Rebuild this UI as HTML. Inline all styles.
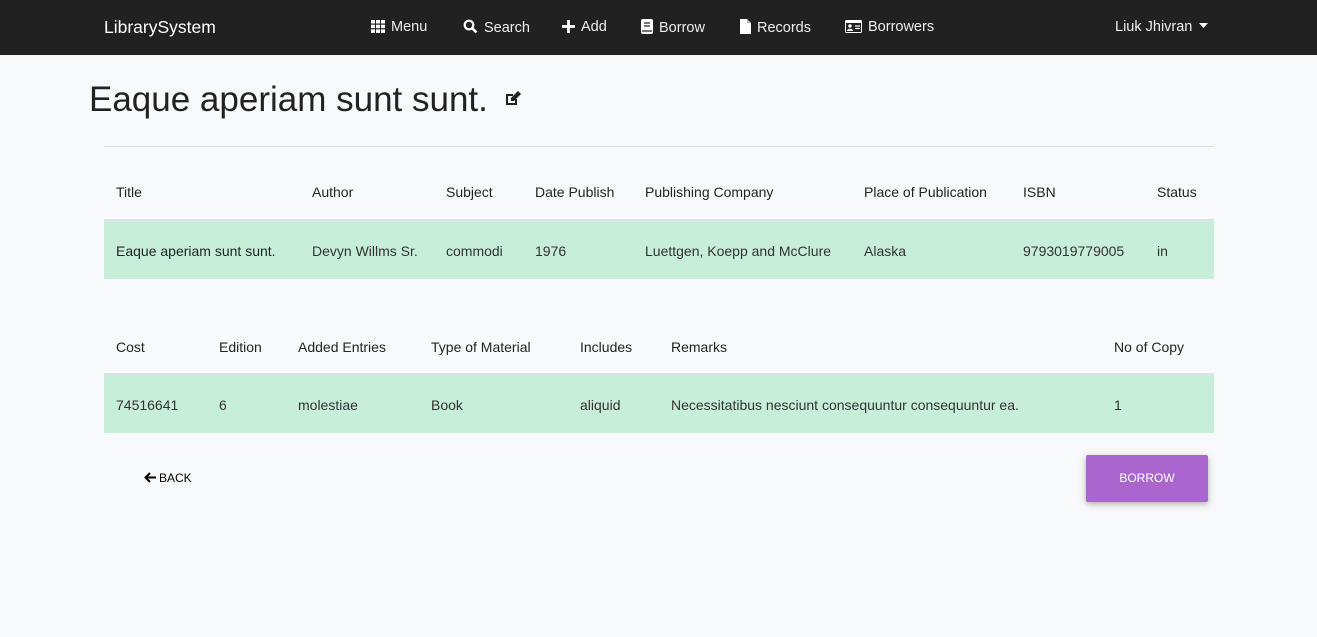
<!DOCTYPE html>
<html><head><meta charset="utf-8"><style>
*{margin:0;padding:0;box-sizing:border-box}
body{width:1317px;height:637px;background:#f8f9fb;font-family:"Liberation Sans",sans-serif;color:#212529;position:relative;overflow:hidden}
.nav{position:absolute;left:0;top:0;width:1317px;height:55px;background:#212121;color:#eee;font-size:14.5px}
.nav span{position:absolute;top:19px;white-space:nowrap}
.nav svg{vertical-align:-2px;margin-right:6px}
.t{position:absolute;font-size:14px;white-space:nowrap}
.row{position:absolute;left:104px;width:1110px;height:58px;background:#c6eed9}
.hb{position:absolute;left:104px;width:1110px;height:2px;background:#dee2e6}
.d{color:#333;font-weight:300}
</style></head><body>
<div class="nav">
<span style="left:104px;top:17px;font-size:17.5px;color:#fff">LibrarySystem</span>
<span style="left:371px"><svg width="14" height="13" viewBox="0 0 14 13" fill="#fff"><rect x="0" y="0" width="4" height="3.5"/><rect x="5" y="0" width="4" height="3.5"/><rect x="10" y="0" width="4" height="3.5"/><rect x="0" y="4.7" width="4" height="3.5"/><rect x="5" y="4.7" width="4" height="3.5"/><rect x="10" y="4.7" width="4" height="3.5"/><rect x="0" y="9.4" width="4" height="3.5"/><rect x="5" y="9.4" width="4" height="3.5"/><rect x="10" y="9.4" width="4" height="3.5"/></svg>Menu</span>
<span style="left:463px"><svg width="15" height="15" viewBox="0 0 15 15"><circle cx="6" cy="6" r="4.3" fill="none" stroke="#fff" stroke-width="2.2"/><path d="M9 9l4.5 4.5" stroke="#fff" stroke-width="2.6"/></svg>Search</span>
<span style="left:562px"><svg width="13" height="13" viewBox="0 0 13 13"><path d="M6.5 0v13M0 6.5h13" stroke="#fff" stroke-width="2.8"/></svg>Add</span>
<span style="left:641px"><svg width="12" height="15" viewBox="0 0 12 15"><rect x="0" y="0" width="12" height="15" rx="2" fill="#fff"/><path d="M3 4h6M3 7h6M1 12h10" stroke="#212121" stroke-width="1.3"/></svg>Borrow</span>
<span style="left:740px"><svg width="11" height="15" viewBox="0 0 11 15"><path d="M0 0h7l4 4v11H0z" fill="#fff"/><path d="M7 0v4h4" fill="#bbb"/></svg>Records</span>
<span style="left:845px"><svg width="17" height="13" viewBox="0 0 17 13"><rect x="0" y="0" width="17" height="13" rx="1.5" fill="#fff"/><rect x="1" y="3" width="15" height="9" fill="#212121"/><circle cx="5" cy="6" r="1.7" fill="#fff"/><path d="M2 11c0-3 6-3 6 0z" fill="#fff"/><path d="M10 6h5M10 8.5h5" stroke="#fff" stroke-width="1.3"/></svg>Borrowers</span>
<span style="left:1115px">Liuk Jhivran <svg width="9" height="6" viewBox="0 0 9 6" style="margin-left:3px;vertical-align:2px"><path d="M0 0h9L4.5 5z" fill="#fff"/></svg></span>
</div>
<div style="position:absolute;left:89px;top:80px;font-size:35px;font-weight:300;color:#222;white-space:nowrap">Eaque aperiam sunt sunt.</div>
<svg style="position:absolute;left:505px;top:91px" width="17" height="15" viewBox="0 0 17 15"><path d="M1 3h7v2H3v7h7V8h2v6H1z" fill="#222"/><path d="M13 0l3 3-7 7H6V7z" fill="#222"/></svg>
<div style="position:absolute;left:104px;top:146px;width:1110px;height:1px;background:#dcdde0"></div>

<div class="hb" style="top:219px"></div>
<div class="row" style="top:221px"></div>
<div class="t" style="left:116px;top:184px">Title</div>
<div class="t" style="left:312px;top:184px">Author</div>
<div class="t" style="left:446px;top:184px">Subject</div>
<div class="t" style="left:535px;top:184px">Date Publish</div>
<div class="t" style="left:645px;top:184px">Publishing Company</div>
<div class="t" style="left:864px;top:184px">Place of Publication</div>
<div class="t" style="left:1023px;top:184px">ISBN</div>
<div class="t" style="left:1157px;top:184px">Status</div>
<div class="t" style="left:116px;top:243px">Eaque aperiam sunt sunt.</div>
<div class="t d" style="left:312px;top:243px">Devyn Willms Sr.</div>
<div class="t d" style="left:446px;top:243px">commodi</div>
<div class="t d" style="left:535px;top:243px">1976</div>
<div class="t d" style="left:645px;top:243px">Luettgen, Koepp and McClure</div>
<div class="t d" style="left:864px;top:243px">Alaska</div>
<div class="t d" style="left:1023px;top:243px">9793019779005</div>
<div class="t d" style="left:1157px;top:243px">in</div>

<div class="hb" style="top:373px"></div>
<div class="row" style="top:375px"></div>
<div class="t" style="left:116px;top:339px">Cost</div>
<div class="t" style="left:219px;top:339px">Edition</div>
<div class="t" style="left:298px;top:339px">Added Entries</div>
<div class="t" style="left:431px;top:339px">Type of Material</div>
<div class="t" style="left:580px;top:339px">Includes</div>
<div class="t" style="left:671px;top:339px">Remarks</div>
<div class="t" style="left:1114px;top:339px">No of Copy</div>
<div class="t d" style="left:116px;top:397px">74516641</div>
<div class="t d" style="left:219px;top:397px">6</div>
<div class="t d" style="left:298px;top:397px">molestiae</div>
<div class="t d" style="left:431px;top:397px">Book</div>
<div class="t d" style="left:580px;top:397px">aliquid</div>
<div class="t d" style="left:671px;top:397px">Necessitatibus nesciunt consequuntur consequuntur ea.</div>
<div class="t d" style="left:1114px;top:397px">1</div>

<div style="position:absolute;left:144px;top:471px;font-size:12px;color:#000;white-space:nowrap"><svg width="12" height="11" viewBox="0 0 12 11" style="vertical-align:-1px;margin-right:3px"><path d="M6 1L1.5 5.5 6 10M1.5 5.5H12" stroke="#000" stroke-width="2" fill="none"/></svg>BACK</div>
<div style="position:absolute;left:1086px;top:455px;width:122px;height:47px;background:#aa66cc;color:#fff;font-size:12px;text-align:center;line-height:47px;box-shadow:0 2px 5px rgba(0,0,0,.2),0 2px 10px rgba(0,0,0,.12);border-radius:2px">BORROW</div>
</body></html>
